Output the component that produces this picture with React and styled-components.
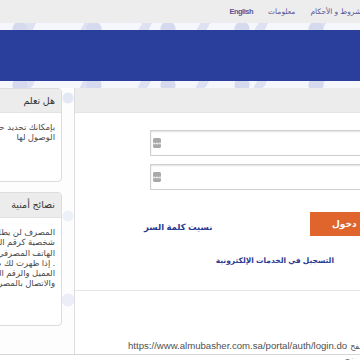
import React from 'react';
import styled, { createGlobalStyle } from 'styled-components';

const GlobalStyle = createGlobalStyle`
  html, body {
    margin: 0;
    padding: 0;
    overflow: hidden;
    background: #fff;
  }
  body {
    font-family: "Liberation Sans", "DejaVu Sans", sans-serif;
  }
`;

const patternBg = `
  background-color: #f6f7fc;
  background-image:
    radial-gradient(circle at 20px 6px, #d5daee 0 7px, transparent 8px),
    radial-gradient(circle at 52px 3px, #e1e5f3 0 5px, transparent 6px),
    linear-gradient(120deg, transparent 40%, #dde1f1 40% 55%, transparent 55%);
  background-size: 74px 14px, 46px 14px, 58px 14px;
`;

const Page = styled.div`
  width: 360px;
  height: 360px;
  overflow: hidden;
`;

const TopBar = styled.div`
  width: 366px;
  height: 23px;
  background: #ededed;
  display: flex;
  align-items: center;
  gap: 15px;
  direction: rtl;
  box-sizing: border-box;
`;

const TopLink = styled.a`
  font-size: 7.5px;
  font-weight: ${(p) => (p.latin ? '600' : 'normal')};
  color: #5a5596;
  text-decoration: none;
  white-space: nowrap;
  letter-spacing: ${(p) => (p.latin ? '-0.5px' : '0')};
`;

const BannerWrap = styled.div`
  ${patternBg}
  padding: 7px 0;
`;

const Banner = styled.div`
  height: 51px;
  background: #293f9b;
`;

const ContentRow = styled.div`
  display: flex;
  height: 266px;
  border-bottom: 1px solid #d6d6d6;
  background-color: #fdfdfe;
  background-image:
    radial-gradient(circle at 68px 10px, #e4e7f4 0 5px, transparent 6px),
    radial-gradient(circle at 68px 212px, #eceef7 0 6px, transparent 7px),
    radial-gradient(circle at 68px 128px, #eef0f8 0 5px, transparent 6px);
`;

const Sidebar = styled.div`
  width: 62px;
  flex: 0 0 62px;
  direction: rtl;
  overflow: hidden;
`;

const Card = styled.div`
  width: 200px;
  height: ${(p) => p.h}px;
  box-sizing: border-box;
  background: #fff;
  border: 1px solid #dcdcdc;
  border-radius: 4px;
  margin-bottom: 10px;
  overflow: hidden;
`;

const CardHeader = styled.div`
  height: ${(p) => p.h}px;
  line-height: ${(p) => p.h}px;
  background: #ececec;
  padding-right: 6px;
  font-size: 9.5px;
  color: #333;
  border-bottom: 1px solid #e2e2e2;
`;

const CardBody = styled.div`
  padding: 9px 6px 0 0;
  font-size: 8.5px;
  line-height: 10.3px;
  color: #4a4a4a;
  white-space: nowrap;
`;

const Main = styled.div`
  margin-left: 12px;
  flex: 0 0 340px;
  border-left: 1px solid #dddddd;
  background: #fff;
`;

const PanelHeader = styled.div`
  height: 24px;
  background: #ececec;
  border-bottom: 1px solid #e4e4e4;
`;

const Form = styled.form`
  width: 250px;
  margin: 17px 0 0 75px;
  display: flex;
  flex-direction: column;
`;

const Field = styled.label`
  height: 26px;
  flex-shrink: 0;
  box-sizing: border-box;
  border: 1px solid #cfcfcf;
  box-shadow: inset 0 1px 2px rgba(0, 0, 0, 0.12);
  background: #fff;
  display: flex;
  align-items: center;
  padding-left: 1px;
  margin-bottom: ${(p) => p.mb}px;
`;

const FieldIcon = styled.span`
  width: 10px;
  height: 10px;
  flex-shrink: 0;
  border-radius: 2px;
  background-color: #a9a9a9;
  background-image:
    radial-gradient(circle, #fff 0 0.8px, transparent 1.2px);
  background-size: 3px 3px;
  background-position: 0.5px 3.5px;
  background-repeat: repeat-x;
  background-clip: content-box;
  padding: 0 1px;
  box-sizing: border-box;
`;

const FieldInput = styled.input`
  flex: 1;
  border: none;
  outline: none;
  height: 100%;
  background: transparent;
`;

const ButtonRow = styled.div`
  display: flex;
  align-items: center;
  justify-content: space-between;
  margin: 22px 0 0 -6px;
  direction: ltr;
`;

const ForgotLink = styled.a`
  font-size: 8.5px;
  font-weight: bold;
  color: #2c3a92;
  text-decoration: none;
  margin-top: 6px;
`;

const LoginButton = styled.button`
  width: 90px;
  height: 24px;
  border: none;
  background: #e0652d;
  color: #fff;
  font-family: inherit;
  font-size: 9px;
  font-weight: bold;
  text-align: left;
  padding-left: 22px;
  cursor: pointer;
`;

const RegisterLink = styled.a`
  align-self: flex-end;
  margin: 19px 66px 0 0;
  font-size: 7.5px;
  font-weight: bold;
  color: #2c3a92;
  text-decoration: none;
  line-height: 12px;
  white-space: nowrap;
`;

const Divider = styled.div`
  height: 1px;
  background: #e6e6e6;
  margin-top: 23px;
`;

const Notice = styled.div`
  margin: 48px 0 0 53px;
  font-size: 9.6px;
  color: #505050;
  line-height: 13px;
  white-space: nowrap;
`;

const NoticeArabic = styled.span`
  font-size: 8px;
  margin-left: 3px;
`;

const NoticeLine = styled.div`
  padding-left: ${(p) => p.indent || 0}px;
`;

function Sidebox({ title, lines, h, headH }) {
  return (
    <Card h={h}>
      <CardHeader h={headH}>{title}</CardHeader>
      <CardBody>
        {lines.map((l) => (
          <div key={l}>{l}</div>
        ))}
      </CardBody>
    </Card>
  );
}

export default function App() {
  return (
    <Page>
      <GlobalStyle />
      <TopBar>
        <TopLink href="#">الشروط و الأحكام</TopLink>
        <TopLink href="#">معلومات</TopLink>
        <TopLink href="#" latin>
          English
        </TopLink>
      </TopBar>
      <BannerWrap>
        <Banner />
      </BannerWrap>
      <ContentRow>
        <Sidebar>
          <Sidebox
            title="هل تعلم"
            h={94}
            headH={23}
            lines={['بإمكانك تحديد حسابات معينة لإخفائها', 'الوصول لها']}
          />
          <Sidebox
            title="نصائح أمنية"
            h={134}
            headH={24}
            lines={[
              'المصرف لن يطلب منك أبداً معلومات',
              'شخصية كرقم العميل أو الرقم السري',
              'الهاتف المصرفي عبر البريد الإلكتروني',
              '. إذا ظهرت لك صفحة تطلب منك رقم',
              'العميل والرقم السري يرجى إغلاقها',
              'والاتصال بالمصرف فوراً',
            ]}
          />
        </Sidebar>
        <Main>
          <PanelHeader />
          <Form>
            <Field mb={8}>
              <FieldIcon />
              <FieldInput type="text" />
            </Field>
            <Field mb={0}>
              <FieldIcon />
              <FieldInput type="password" />
            </Field>
            <ButtonRow>
              <ForgotLink href="#">نسيت كلمة السر</ForgotLink>
              <LoginButton type="submit">دخول</LoginButton>
            </ButtonRow>
            <RegisterLink href="#">التسجيل في الخدمات الإلكترونية</RegisterLink>
          </Form>
          <Divider />
          <Notice>
            <NoticeLine>
              https://www.almubasher.com.sa/portal/auth/login.do
              <NoticeArabic>متصفح</NoticeArabic>
            </NoticeLine>
            <NoticeLine indent={214}>
              <NoticeArabic>في المتصفح</NoticeArabic>
            </NoticeLine>
          </Notice>
        </Main>
      </ContentRow>
    </Page>
  );
}
